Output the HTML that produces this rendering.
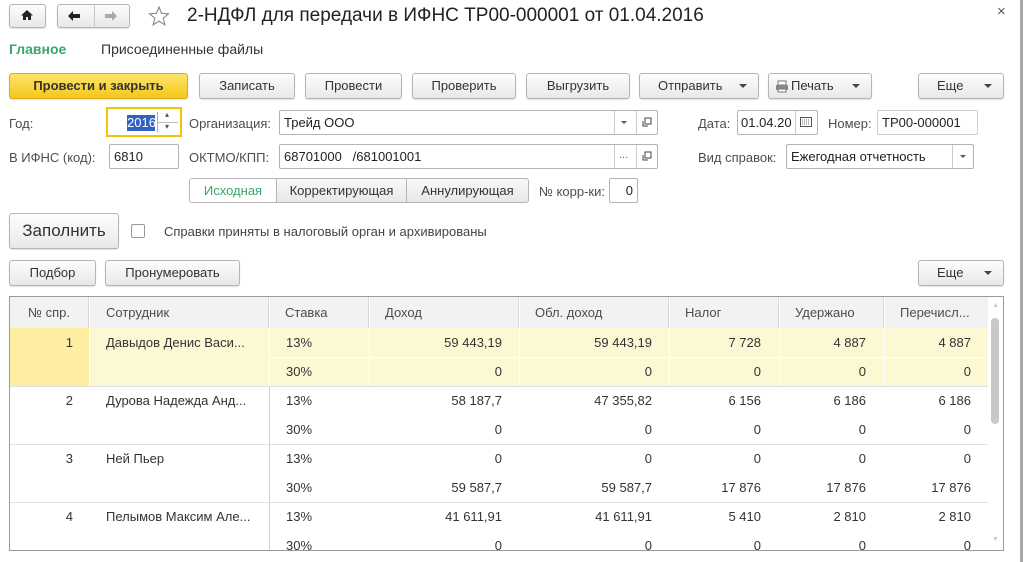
<!DOCTYPE html>
<html><head><meta charset="utf-8">
<style>
*{box-sizing:border-box;margin:0;padding:0}
body{width:1028px;height:562px;overflow:hidden;background:#fff;font-family:"Liberation Sans",Arial,sans-serif;font-size:13px;color:#333;position:relative}
.a{position:absolute}
.btn{position:absolute;border:1px solid #b5b5b5;border-radius:3px;background:linear-gradient(#fdfdfd,#e8e8e8);text-align:center;color:#333;font-size:13px;box-shadow:0 1px 1px rgba(0,0,0,.12)}
.fld{position:absolute;border:1px solid #b3b3b3;border-radius:2px;background:#fff;font-size:13px;color:#222;padding-left:4px}
.lbl{position:absolute;font-size:13px;color:#4d4d4d}
.tri{display:inline-block;width:0;height:0;border-left:4px solid transparent;border-right:4px solid transparent;border-top:4px solid #444;vertical-align:middle}
.th{position:absolute;top:297px;height:31px;background:#f2f2f2;border-right:1px solid #d8d8d8;line-height:31px;color:#4d4d4d;font-size:13px}
.c{position:absolute;font-size:13px;color:#333;line-height:16px}
.r{text-align:right}
</style></head><body>
<!-- right edge bar -->
<div class="a" style="left:1020px;top:0;width:3px;height:562px;background:#a8a8a8"></div>

<!-- nav -->
<div class="btn" style="left:9px;top:4px;width:37px;height:24px"></div>
<svg class="a" style="left:20px;top:8px" width="14" height="14" viewBox="0 0 14 14"><path d="M7 2 L1 7.5 H3 V12 H6 V9 H8 V12 H11 V7.5 H13 Z" fill="#222"/></svg>
<div class="btn" style="left:57px;top:4px;width:73px;height:24px"></div>
<div class="a" style="left:94px;top:5px;width:1px;height:22px;background:#c8c8c8"></div>
<svg class="a" style="left:66px;top:9px" width="16" height="14" viewBox="0 0 16 14"><path d="M2 7 L7 2 V5 H14 V9 H7 V12 Z" fill="#222"/></svg>
<svg class="a" style="left:103px;top:9px" width="16" height="14" viewBox="0 0 16 14"><path d="M14 7 L9 2 V5 H2 V9 H9 V12 Z" fill="#aaa"/></svg>
<svg class="a" style="left:148px;top:5px" width="22" height="22" viewBox="0 0 22 22"><path d="M11 2 L13.6 8.3 L20.5 8.8 L15.2 13.2 L16.9 19.9 L11 16.2 L5.1 19.9 L6.8 13.2 L1.5 8.8 L8.4 8.3 Z" fill="none" stroke="#888" stroke-width="1.1"/></svg>
<div class="a" style="left:187px;top:5px;font-size:19px;color:#222">2-НДФЛ для передачи в ИФНС ТР00-000001 от 01.04.2016</div>
<div class="a" style="left:997px;top:3px;font-size:15px;color:#555">×</div>

<!-- tabs -->
<div class="a" style="left:9px;top:41px;font-size:14px;font-weight:bold;color:#3aa56b">Главное</div>
<div class="a" style="left:101px;top:41px;font-size:14px;color:#333">Присоединенные файлы</div>

<!-- toolbar -->
<div class="btn" style="left:9px;top:73px;width:179px;height:26px;line-height:24px;background:linear-gradient(#fde46a,#f5c71a);border-color:#d9ad1c;font-weight:bold;color:#333">Провести и закрыть</div>
<div class="btn" style="left:199px;top:73px;width:96px;height:26px;line-height:24px">Записать</div>
<div class="btn" style="left:305px;top:73px;width:97px;height:26px;line-height:24px">Провести</div>
<div class="btn" style="left:412px;top:73px;width:104px;height:26px;line-height:24px">Проверить</div>
<div class="btn" style="left:526px;top:73px;width:104px;height:26px;line-height:24px">Выгрузить</div>
<div class="btn" style="left:639px;top:73px;width:120px;height:26px;line-height:24px;text-align:left;padding-left:18px">Отправить<span class="tri" style="position:absolute;right:11px;top:10px"></span></div>
<div class="btn" style="left:768px;top:73px;width:104px;height:26px;line-height:24px;text-align:left;padding-left:22px"><svg style="position:absolute;left:6px;top:6px" width="14" height="13" viewBox="0 0 14 13"><rect x="3" y="1" width="8" height="4" fill="#fff" stroke="#777"/><rect x="1" y="5" width="12" height="5" fill="#888"/><rect x="3" y="9" width="8" height="3" fill="#fff" stroke="#777"/></svg>Печать<span class="tri" style="position:absolute;right:11px;top:10px"></span></div>
<div class="btn" style="left:918px;top:73px;width:86px;height:26px;line-height:24px;text-align:left;padding-left:18px">Еще<span class="tri" style="position:absolute;right:11px;top:10px"></span></div>

<!-- row 1 -->
<div class="lbl" style="left:9px;top:116px">Год:</div>
<div class="a" style="left:106px;top:107px;width:76px;height:30px;border:2px solid #f5c400;background:#fff"></div>
<div class="a" style="left:127px;top:115px;width:28px;height:16px;background:#3161c3;color:#fff;font-size:13px;line-height:16px">2016</div>
<div class="a" style="left:157px;top:112px;width:1px;height:20px;background:#aaa"></div>
<div class="a" style="left:158px;top:122px;width:20px;height:1px;background:#bbb"></div>
<div class="a" style="left:165px;top:110px;font-size:8px;color:#555">▴</div>
<div class="a" style="left:165px;top:122px;font-size:8px;color:#555">▾</div>
<div class="lbl" style="left:189px;top:116px">Организация:</div>
<div class="fld" style="left:279px;top:110px;width:379px;height:25px;line-height:23px">Трейд ООО</div>
<div class="a" style="left:614px;top:111px;width:1px;height:23px;background:#ccc"></div>
<div class="a" style="left:636px;top:111px;width:1px;height:23px;background:#ccc"></div>
<div class="a" style="left:621px;top:121px;border-left:3px solid transparent;border-right:3px solid transparent;border-top:3px solid #555"></div>
<svg class="a" style="left:641px;top:117px" width="11" height="11" viewBox="0 0 11 11"><rect x="4" y="1" width="6" height="6" fill="none" stroke="#444"/><path d="M2 4 V9 H7" fill="none" stroke="#444"/></svg>
<div class="lbl" style="left:698px;top:116px">Дата:</div>
<div class="fld" style="left:737px;top:110px;width:81px;height:25px;line-height:23px;padding-left:3px">01.04.20</div>
<div class="a" style="left:795px;top:111px;width:1px;height:23px;background:#ccc"></div>
<svg class="a" style="left:800px;top:117px" width="12" height="10" viewBox="0 0 12 10"><rect x="0.5" y="0.5" width="11" height="9" fill="#fff" stroke="#555"/><path d="M2 3h8M2 5h8M2 7h8" stroke="#777" stroke-dasharray="1 1"/></svg>
<div class="lbl" style="left:828px;top:116px">Номер:</div>
<div class="fld" style="left:877px;top:110px;width:101px;height:25px;line-height:23px;border-color:#ccc">ТР00-000001</div>

<!-- row 2 -->
<div class="lbl" style="left:9px;top:150px">В ИФНС (код):</div>
<div class="fld" style="left:109px;top:144px;width:70px;height:25px;line-height:23px">6810</div>
<div class="lbl" style="left:189px;top:150px">ОКТМО/КПП:</div>
<div class="fld" style="left:279px;top:144px;width:379px;height:25px;line-height:23px">68701000&nbsp;&nbsp;&nbsp;/681001001</div>
<div class="a" style="left:614px;top:145px;width:1px;height:23px;background:#ccc"></div>
<div class="a" style="left:636px;top:145px;width:1px;height:23px;background:#ccc"></div>
<div class="a" style="left:619px;top:149px;font-size:11px;color:#666">...</div>
<svg class="a" style="left:641px;top:151px" width="11" height="11" viewBox="0 0 11 11"><rect x="4" y="1" width="6" height="6" fill="none" stroke="#444"/><path d="M2 4 V9 H7" fill="none" stroke="#444"/></svg>
<div class="lbl" style="left:698px;top:150px">Вид справок:</div>
<div class="fld" style="left:786px;top:144px;width:188px;height:25px;line-height:23px">Ежегодная отчетность</div>
<div class="a" style="left:952px;top:145px;width:1px;height:23px;background:#ccc"></div>
<div class="a" style="left:960px;top:155px;border-left:3px solid transparent;border-right:3px solid transparent;border-top:3px solid #555"></div>

<!-- radio tabs -->
<div class="a" style="left:189px;top:178px;width:340px;height:25px;border:1px solid #b5b5b5;border-radius:3px;background:linear-gradient(#f8f8f8,#e8e8e8)"></div>
<div class="a" style="left:190px;top:179px;width:86px;height:23px;background:#fff;border-radius:2px 0 0 2px;color:#3aa56b;text-align:center;line-height:23px">Исходная</div>
<div class="a" style="left:276px;top:179px;width:1px;height:23px;background:#b5b5b5"></div>
<div class="a" style="left:277px;top:179px;width:129px;line-height:23px;text-align:center">Корректирующая</div>
<div class="a" style="left:406px;top:179px;width:1px;height:23px;background:#b5b5b5"></div>
<div class="a" style="left:407px;top:179px;width:121px;line-height:23px;text-align:center">Аннулирующая</div>
<div class="lbl" style="left:539px;top:184px">№ корр-ки:</div>
<div class="fld" style="left:609px;top:178px;width:29px;height:25px;line-height:23px;text-align:right;padding-right:4px">0</div>

<!-- fill -->
<div class="btn" style="left:9px;top:213px;width:110px;height:36px;line-height:34px;font-size:17px">Заполнить</div>
<div class="a" style="left:131px;top:224px;width:14px;height:14px;border:1px solid #999;border-radius:2px;background:#fff"></div>
<div class="lbl" style="left:164px;top:224px;color:#444">Справки приняты в налоговый орган и архивированы</div>

<div class="btn" style="left:9px;top:260px;width:87px;height:26px;line-height:24px">Подбор</div>
<div class="btn" style="left:105px;top:260px;width:135px;height:26px;line-height:24px">Пронумеровать</div>
<div class="btn" style="left:918px;top:260px;width:86px;height:26px;line-height:24px;text-align:left;padding-left:18px">Еще<span class="tri" style="position:absolute;right:11px;top:10px"></span></div>

<!-- table -->
<div class="a" style="left:9px;top:296px;width:995px;height:255px;border:1px solid #9a9a9a;overflow:hidden">
</div>
<div class="th" style="left:10px;width:79px;text-align:center;padding-left:0">№ спр.</div>
<div class="th" style="left:90px;width:179px;padding-left:16px">Сотрудник</div>
<div class="th" style="left:270px;width:99px;padding-left:15px">Ставка</div>
<div class="th" style="left:370px;width:149px;padding-left:15px">Доход</div>
<div class="th" style="left:520px;width:149px;padding-left:15px">Обл. доход</div>
<div class="th" style="left:670px;width:109px;padding-left:15px">Налог</div>
<div class="th" style="left:780px;width:104px;padding-left:15px">Удержано</div>
<div class="th" style="left:885px;width:103px;padding-left:15px;border-right:none">Перечисл...</div>
<div class="a" style="left:988px;top:297px;width:15px;height:253px;background:#fff"></div>
<div class="a" style="left:991px;top:318px;width:8px;height:106px;background:#c8c8c8;border-radius:4px"></div>
<div class="a" style="left:992px;top:302px;font-size:7px;color:#ccc">▲</div>
<div class="a" style="left:992px;top:536px;font-size:7px;color:#ccc">▼</div>

<!-- highlighted group -->
<div class="a" style="left:10px;top:328px;width:79px;height:58px;background:#fdeea2"></div>
<div class="a" style="left:90px;top:328px;width:898px;height:58px;background:#fdf8d4"></div>
<div class="a" style="left:89px;top:328px;width:1px;height:58px;background:#fff"></div>
<div class="a" style="left:269px;top:328px;width:1px;height:58px;background:#fff"></div>
<div class="a" style="left:369px;top:328px;width:1px;height:58px;background:#fff"></div>
<div class="a" style="left:519px;top:328px;width:1px;height:58px;background:#fff"></div>
<div class="a" style="left:669px;top:328px;width:1px;height:58px;background:#fff"></div>
<div class="a" style="left:779px;top:328px;width:1px;height:58px;background:#fff"></div>
<div class="a" style="left:884px;top:328px;width:1px;height:58px;background:#fff"></div>
<div class="a" style="left:270px;top:357px;width:718px;height:1px;background:#fff"></div>

<!-- white group lines -->
<div class="a" style="left:269px;top:386px;width:1px;height:164px;background:#d0d0d0"></div>
<div class="a" style="left:10px;top:386px;width:978px;height:1px;background:#e0e0e0"></div>
<div class="a" style="left:10px;top:444px;width:978px;height:1px;background:#e0e0e0"></div>
<div class="a" style="left:10px;top:502px;width:978px;height:1px;background:#e0e0e0"></div>

<!-- data -->
<div id="d"></div>
<div class="c r" style="left:10px;top:335px;width:63px">1</div>
<div class="c" style="left:106px;top:335px">Давыдов Денис Васи...</div>
<div class="c r" style="left:10px;top:393px;width:63px">2</div>
<div class="c" style="left:106px;top:393px">Дурова Надежда Анд...</div>
<div class="c r" style="left:10px;top:451px;width:63px">3</div>
<div class="c" style="left:106px;top:451px">Ней Пьер</div>
<div class="c r" style="left:10px;top:509px;width:63px">4</div>
<div class="c" style="left:106px;top:509px">Пелымов Максим Але...</div>

<div class="c" style="left:286px;top:335px">13%</div><div class="c" style="left:286px;top:364px">30%</div>
<div class="c" style="left:286px;top:393px">13%</div><div class="c" style="left:286px;top:422px">30%</div>
<div class="c" style="left:286px;top:451px">13%</div><div class="c" style="left:286px;top:480px">30%</div>
<div class="c" style="left:286px;top:509px">13%</div><div class="c" style="left:286px;top:538px;height:12px;overflow:hidden">30%</div>

<!-- numbers: right edges 502,652,761,866,971 -->
<div class="c r" style="left:370px;top:335px;width:132px">59 443,19</div>
<div class="c r" style="left:520px;top:335px;width:132px">59 443,19</div>
<div class="c r" style="left:670px;top:335px;width:91px">7 728</div>
<div class="c r" style="left:780px;top:335px;width:86px">4 887</div>
<div class="c r" style="left:885px;top:335px;width:86px">4 887</div>

<div class="c r" style="left:370px;top:364px;width:132px">0</div>
<div class="c r" style="left:520px;top:364px;width:132px">0</div>
<div class="c r" style="left:670px;top:364px;width:91px">0</div>
<div class="c r" style="left:780px;top:364px;width:86px">0</div>
<div class="c r" style="left:885px;top:364px;width:86px">0</div>

<div class="c r" style="left:370px;top:393px;width:132px">58 187,7</div>
<div class="c r" style="left:520px;top:393px;width:132px">47 355,82</div>
<div class="c r" style="left:670px;top:393px;width:91px">6 156</div>
<div class="c r" style="left:780px;top:393px;width:86px">6 186</div>
<div class="c r" style="left:885px;top:393px;width:86px">6 186</div>

<div class="c r" style="left:370px;top:422px;width:132px">0</div>
<div class="c r" style="left:520px;top:422px;width:132px">0</div>
<div class="c r" style="left:670px;top:422px;width:91px">0</div>
<div class="c r" style="left:780px;top:422px;width:86px">0</div>
<div class="c r" style="left:885px;top:422px;width:86px">0</div>

<div class="c r" style="left:370px;top:451px;width:132px">0</div>
<div class="c r" style="left:520px;top:451px;width:132px">0</div>
<div class="c r" style="left:670px;top:451px;width:91px">0</div>
<div class="c r" style="left:780px;top:451px;width:86px">0</div>
<div class="c r" style="left:885px;top:451px;width:86px">0</div>

<div class="c r" style="left:370px;top:480px;width:132px">59 587,7</div>
<div class="c r" style="left:520px;top:480px;width:132px">59 587,7</div>
<div class="c r" style="left:670px;top:480px;width:91px">17 876</div>
<div class="c r" style="left:780px;top:480px;width:86px">17 876</div>
<div class="c r" style="left:885px;top:480px;width:86px">17 876</div>

<div class="c r" style="left:370px;top:509px;width:132px">41 611,91</div>
<div class="c r" style="left:520px;top:509px;width:132px">41 611,91</div>
<div class="c r" style="left:670px;top:509px;width:91px">5 410</div>
<div class="c r" style="left:780px;top:509px;width:86px">2 810</div>
<div class="c r" style="left:885px;top:509px;width:86px">2 810</div>

<div class="c r" style="left:370px;top:538px;width:132px;height:12px;overflow:hidden">0</div>
<div class="c r" style="left:520px;top:538px;width:132px;height:12px;overflow:hidden">0</div>
<div class="c r" style="left:670px;top:538px;width:91px;height:12px;overflow:hidden">0</div>
<div class="c r" style="left:780px;top:538px;width:86px;height:12px;overflow:hidden">0</div>
<div class="c r" style="left:885px;top:538px;width:86px;height:12px;overflow:hidden">0</div>
</body></html>
